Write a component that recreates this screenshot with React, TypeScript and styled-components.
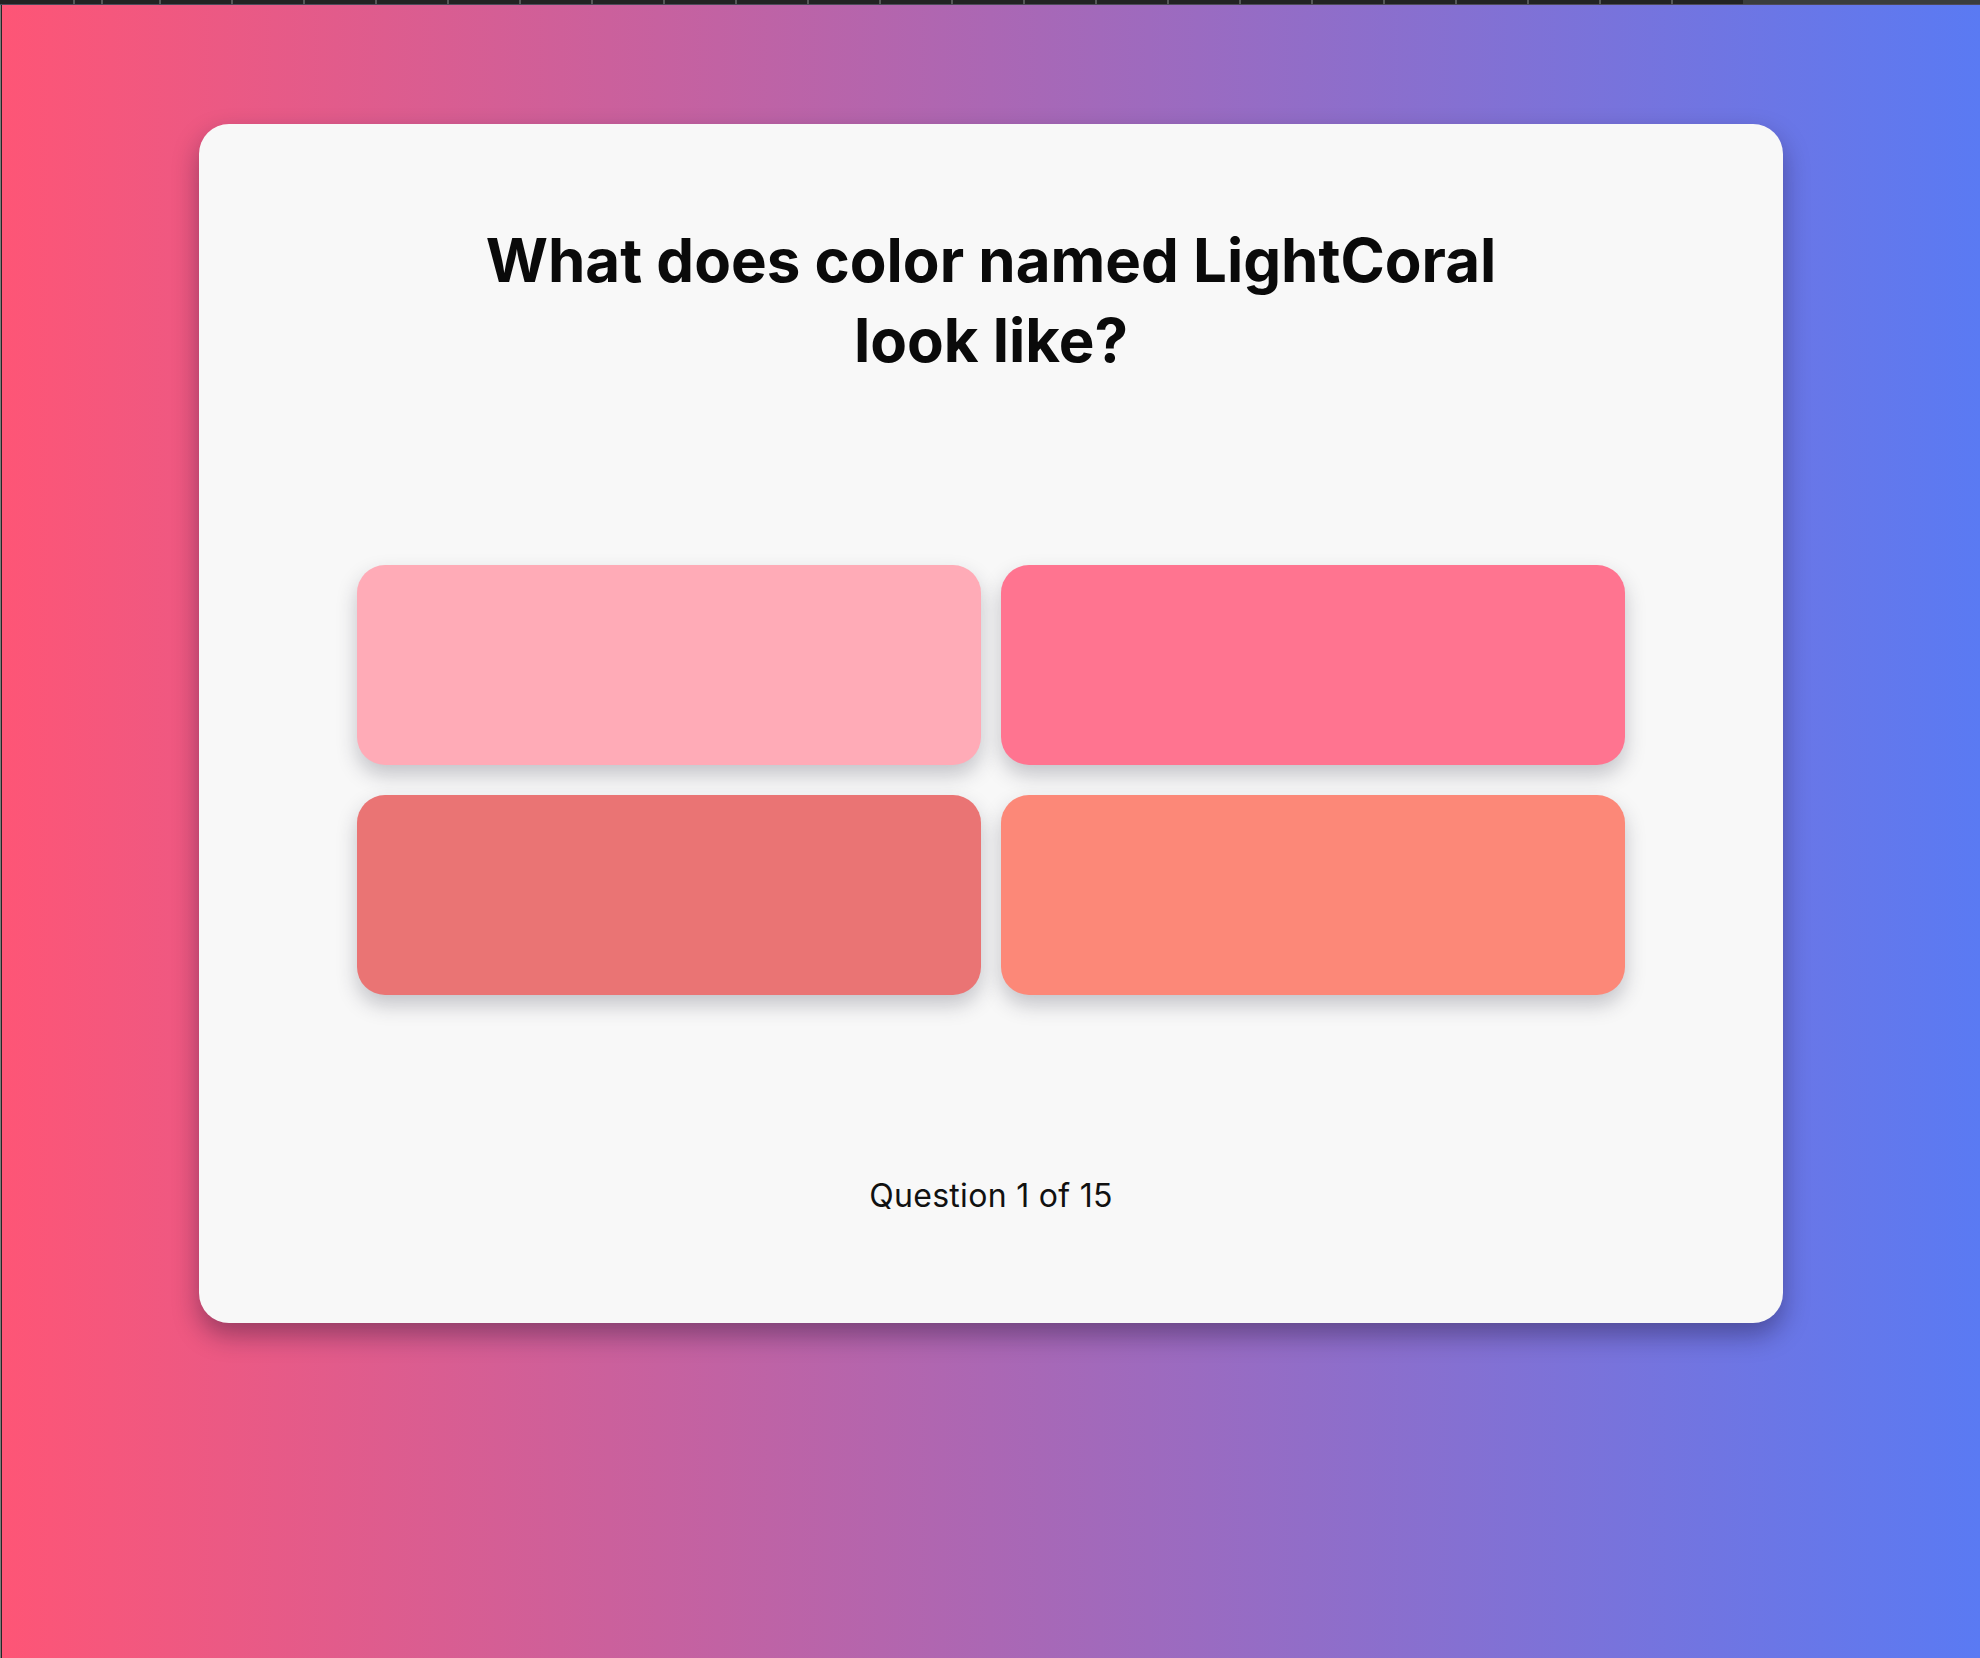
import React from "react";
import styled, { createGlobalStyle } from "styled-components";

const GlobalStyle = createGlobalStyle`
  html, body {
    margin: 0;
    padding: 0;
    background: #1f2020;
  }
  * { box-sizing: border-box; }
`;

const Page = styled.div`
  position: relative;
  display: flex;
  min-height: 1658px;
  width: 1980px;
  overflow: hidden;
`;

const LeftEdge = styled.div`
  width: 2px;
  flex: none;
  background: linear-gradient(to right, #7c7c7c 0 1px, #262626 1px 2px);
`;

const Stage = styled.main`
  flex: 1;
  display: flex;
  justify-content: center;
  align-items: flex-start;
  background: linear-gradient(to right, #fe5576 0%, #ab67b4 50%, #5a7af3 100%);
`;

const Card = styled.section`
  margin-top: 124px;
  width: 1584px;
  height: 1199px;
  background: #f8f8f8;
  border-radius: 30px;
  box-shadow: 0 12px 26px rgba(20, 10, 40, 0.38);
  display: flex;
  flex-direction: column;
  align-items: center;
  padding-top: 96px;
`;

const Title = styled.h1`
  margin: 0;
  max-width: 1080px;
  text-align: center;
  font-family: Inter, "Liberation Sans", sans-serif;
  font-weight: 700;
  font-size: 60px;
  line-height: 80px;
  letter-spacing: 0;
  color: #0a0a0a;
`;

const SwatchGrid = styled.div`
  margin-top: 185px;
  width: 80%;
  display: grid;
  grid-template-columns: 1fr 1fr;
  column-gap: 20px;
  row-gap: 30px;
`;

const Swatch = styled.button<{ $color: string }>`
  height: 200px;
  border: none;
  padding: 0;
  border-radius: 28px;
  background: ${(p) => p.$color};
  box-shadow: 0 10px 20px rgba(40, 40, 60, 0.25);
  cursor: pointer;
`;

const Progress = styled.p`
  margin: 181px 0 0;
  font-family: Inter, "Liberation Sans", sans-serif;
  font-weight: 400;
  font-size: 32px;
  line-height: 39px;
  letter-spacing: 0.3px;
  color: #111;
`;

const TopBar = styled.div`
  position: absolute;
  top: 0;
  left: 0;
  right: 0;
  height: 5px;
  background: #222323;
  border-bottom: 1px solid #4d4a5a;
`;

const BarTail = styled.div`
  position: absolute;
  top: 0;
  bottom: 0;
  left: 1743px;
  right: 0;
  background: #3a3d3d;
`;

const Tick = styled.span`
  position: absolute;
  top: 0;
  width: 2px;
  height: 4px;
  background: #555858;
`;

const ticks = [73, 101, ...Array.from({ length: 22 }, (_, i) => 159 + i * 72)];

const colors = ["#ffabb7", "#ff7490", "#ea7474", "#fc8878"];

export default function App() {
  return (
    <>
      <GlobalStyle />
      <Page>
        <LeftEdge />
        <Stage>
          <Card>
            <Title>What does color named LightCoral look like?</Title>
            <SwatchGrid>
              {colors.map((c) => (
                <Swatch key={c} $color={c} aria-label="color option" />
              ))}
            </SwatchGrid>
            <Progress>Question 1 of 15</Progress>
          </Card>
        </Stage>
        <TopBar>
          {ticks.map((x) => (
            <Tick key={x} style={{ left: x }} />
          ))}
          <BarTail />
        </TopBar>
      </Page>
    </>
  );
}
